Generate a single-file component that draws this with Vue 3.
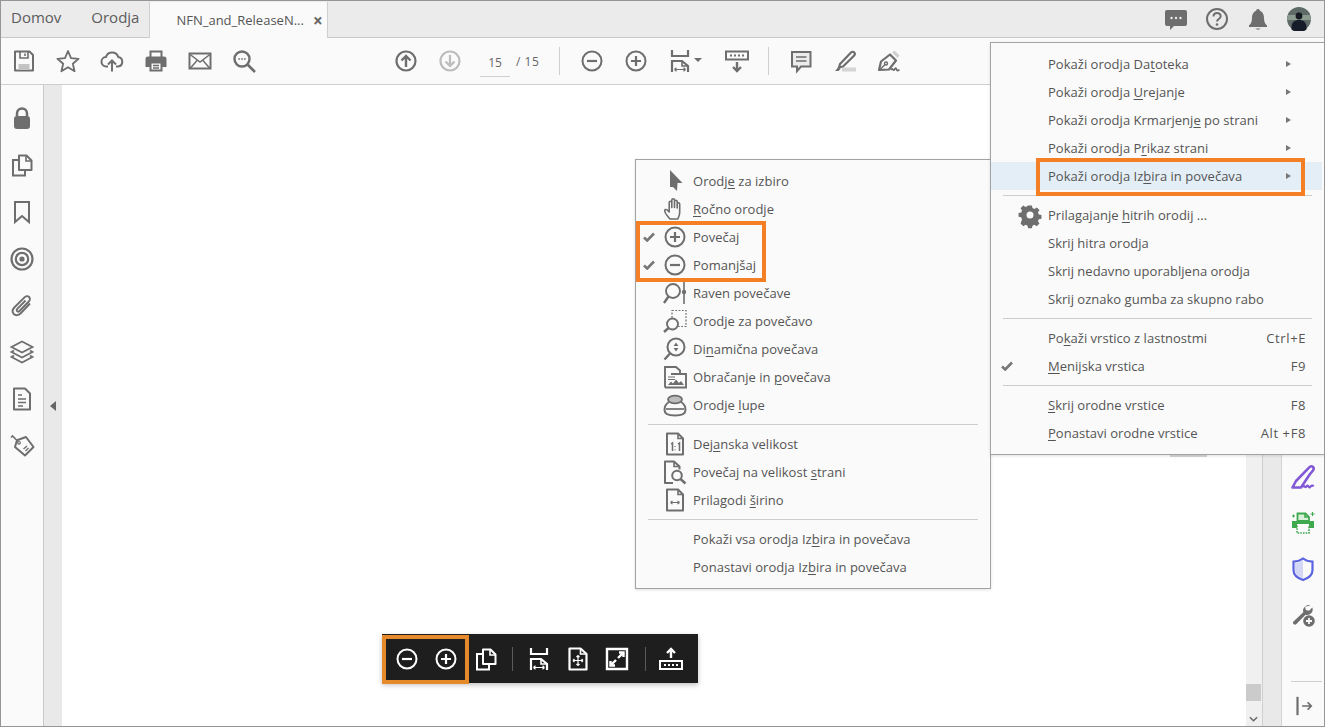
<template>
  <div class="app">
    <!-- tab bar -->
    <div class="tabbar">
      <span class="nav-tab domov">Domov</span>
      <span class="nav-tab orodja">Orodja</span>
      <div class="doc-tab">
        <span>NFN_and_ReleaseN...</span>
        <span class="tab-close">×</span>
      </div>
      <div class="tab-icons">
        <svg class="ico" viewBox="0 0 24 24" v-html="icons.chat"></svg>
        <svg class="ico" viewBox="0 0 24 24" v-html="icons.help"></svg>
        <svg class="ico" viewBox="0 0 24 24" v-html="icons.bell"></svg>
        <svg class="avatar" viewBox="0 0 24 24">
          <circle cx="12" cy="12" r="12" fill="#5d6a66" />
          <path d="M1 8h22a12 12 0 0 1 1 5H0a12 12 0 0 1 1-5z" fill="#8a9a8e" />
          <circle cx="12" cy="9" r="3.4" fill="#14171f" />
          <path d="M4.500 22.500c-.5-7 2.500-9.500 7.500-9.500s8 2.500 7.500 9.500a12 12 0 0 1-15 0z" fill="#171c2b" />
        </svg>
      </div>
    </div>

    <!-- main toolbar -->
    <div class="toolbar">
      <button v-for="k in toolsLeft" :key="k" class="tool"><svg class="ico" viewBox="0 0 24 24" v-html="icons[k]"></svg></button>
      <div class="nav-group">
        <button class="tool"><svg class="ico" viewBox="0 0 24 24" v-html="icons.up"></svg></button>
        <button class="tool off"><svg class="ico" viewBox="0 0 24 24" v-html="icons.down"></svg></button>
        <span class="page-input">15</span>
        <span class="page-total">/ 15</span>
        <i class="tool-sep first"></i>
        <button class="tool"><svg class="ico" viewBox="0 0 24 24" v-html="icons.minus"></svg></button>
        <button class="tool"><svg class="ico" viewBox="0 0 24 24" v-html="icons.plus"></svg></button>
        <button class="tool fit"><svg class="ico" viewBox="0 0 24 24" v-html="icons.fit"></svg><b class="caret"></b></button>
        <button class="tool"><svg class="ico" viewBox="0 0 24 24" v-html="icons.dock"></svg></button>
        <i class="tool-sep"></i>
        <button class="tool"><svg class="ico" viewBox="0 0 24 24" v-html="icons.comment"></svg></button>
        <button class="tool"><svg class="ico" viewBox="0 0 24 24" v-html="icons.marker"></svg></button>
        <button class="tool"><svg class="ico" viewBox="0 0 24 24" v-html="icons.pen"></svg></button>
      </div>
    </div>

    <!-- body -->
    <div class="body">
      <div class="left-rail">
        <button v-for="k in railLeft" :key="k" class="rail-btn"><svg class="ico" viewBox="0 0 24 24" v-html="icons[k]"></svg></button>
      </div>
      <div class="left-panel"><b class="collapse"></b></div>
      <div class="page"></div>
      <div class="scrollbar">
        <div class="thumb"></div>
        <svg class="chev" viewBox="0 0 10 6"><path d="M1 1l4 4 4-4" fill="none" stroke="#666" stroke-width="1.6" /></svg>
      </div>
      <div class="right-panel"></div>
      <div class="right-rail">
        <button class="rail-btn sign"><svg class="ico" viewBox="0 0 24 24" v-html="icons.sign"></svg></button>
        <button class="rail-btn green"><svg class="ico" viewBox="0 0 24 24" v-html="icons.printer"></svg></button>
        <button class="rail-btn shield"><svg class="ico" viewBox="0 0 24 24" v-html="icons.shield"></svg></button>
        <button class="rail-btn"><svg class="ico" viewBox="0 0 24 24" v-html="icons.wrench"></svg></button>
        <div class="rail-sep"></div>
        <button class="rail-btn last"><svg class="ico" viewBox="0 0 24 24" v-html="icons.expand"></svg></button>
      </div>
    </div>

    <!-- bit of the page toolbar that peeks out under the menu -->
    <div class="peek"></div>

    <!-- context menus -->
    <div v-for="m in menus" :key="m.id" class="menu" :class="m.id">
      <template v-for="(it, i) in m.items" :key="i">
        <div v-if="it === '-'" class="sep"></div>
        <div v-else class="row" :class="{ active: it.active }">
          <span class="check"><svg v-if="it.check" viewBox="0 0 12 10"><path d="M1 5.500l3.200 3L11 1.500" fill="none" stroke="#777" stroke-width="2.600" /></svg></span>
          <span class="row-icon"><svg v-if="it.icon" class="ico" viewBox="0 0 24 24" v-html="icons[it.icon]"></svg></span>
          <span class="label">{{ parts(it.t)[0] }}<u>{{ parts(it.t)[1] }}</u>{{ parts(it.t)[2] }}</span>
          <span v-if="it.key" class="shortcut">{{ it.key }}</span>
          <b v-if="it.sub" class="sub-arrow"></b>
        </div>
      </template>
    </div>

    <!-- floating toolbar -->
    <div class="float-bar">
      <svg class="ico a" viewBox="0 0 24 24" v-html="icons.minus"></svg>
      <svg class="ico b" viewBox="0 0 24 24" v-html="icons.plus"></svg>
      <svg class="ico c" viewBox="0 0 24 24" v-html="icons.pages"></svg>
      <i class="float-sep s1"></i>
      <svg class="ico d" viewBox="0 0 24 24" v-html="icons.fit"></svg>
      <svg class="ico e" viewBox="0 0 24 24" v-html="icons.fitPage"></svg>
      <svg class="ico f" viewBox="0 0 24 24" v-html="icons.full"></svg>
      <i class="float-sep s2"></i>
      <svg class="ico g" viewBox="0 0 24 24" v-html="icons.undock"></svg>
    </div>

    <!-- orange callouts -->
    <div class="mark mark-zoom"></div>
    <div class="mark mark-row"></div>
    <div class="mark mark-float"></div>
  </div>
</template>

<script setup>
const fill = 'fill="currentColor" stroke="none"'

const icons = {
  save: `<path d="M3 2.500h14.500L21 6v15.500H3z" stroke-linejoin="round"/><path d="M8 3v6h8V3M13 4.500v2.500" stroke-width="1.600"/><rect x="6.500" y="15" width="11" height="6" fill="#c4c4c4" stroke="none"/>`,
  star: `<path d="M12 2l3 7.200 7.600.6-5.800 4.900 1.800 7.500L12 18.200l-6.600 4 1.800-7.500L1.400 9.800 9 9.200z" stroke-width="1.800" stroke-linejoin="round"/>`,
  cloud: `<path d="M8 17.500H6.500a4.700 4.700 0 0 1-.6-9.400A6.500 6.500 0 0 1 18.300 8a4.800 4.800 0 0 1-.3 9.500H16"/><path d="M12 22.500V11.500M8 15.500l4-4 4 4"/>`,
  print: `<path d="M6.500 8V2.500h11V8" stroke-width="2"/><path d="M4 7.500h16a2.500 2.500 0 0 1 2.500 2.500v8H18v-4H6v4H1.500v-8A2.500 2.500 0 0 1 4 7.500z" ${fill}/><path d="M6.500 13.500h11v8h-11z" stroke-width="2"/><path d="M9 16.500h6M9 19h6" stroke-width="1.300"/>`,
  mail: `<path d="M1.500 4.500h21v15h-21z"/><path d="M1.500 5l10.500 8 10.500-8M2 19.500l7.500-8.500M22 19.500L14.500 11" stroke-width="1.500"/>`,
  search: `<circle cx="10" cy="10" r="7.500" stroke-width="2.400"/><path d="M15.500 15.500L23 23" stroke-width="2.600"/><path d="M6.500 10h1.200M9.400 10h1.200M12.300 10h1.200" stroke-width="1.800"/>`,
  up: `<circle cx="12" cy="12" r="9.500" stroke-width="2.200"/><path d="M12 18V7M7.500 11.500L12 7l4.500 4.500" stroke-width="2.400"/>`,
  down: `<circle cx="12" cy="12" r="9.500" stroke-width="2.200"/><path d="M12 6v11M7.500 12.500L12 17l4.500-4.500" stroke-width="2.200"/>`,
  minus: `<circle cx="12" cy="12" r="9.500" stroke-width="2"/><path d="M7 12h10" stroke-width="2.200"/>`,
  plus: `<circle cx="12" cy="12" r="9.500" stroke-width="2"/><path d="M7 12h10M12 7v10" stroke-width="2.200"/>`,
  fit: `<path d="M4 1v6h16V1" stroke-width="2.200"/><path d="M4 23v-11h10l6 5v6" stroke-width="2.200"/><path d="M14 12v5h6" stroke-width="1.600"/><path d="M6.500 20.500h11M6.500 20.500l2-1.800M6.500 20.500l2 1.800M17.500 20.500l-2-1.800M17.500 20.500l-2 1.800" stroke-width="1.200"/>`,
  dock: `<path d="M1 2.500h22v8H1z" stroke-width="2"/><path d="M5 6.500h2M9 6.500h2M13 6.500h2M17 6.500h2" stroke-width="2"/><path d="M12 13v9M8 18l4 4 4-4" stroke-width="2.400"/>`,
  comment: `<path d="M3 3h18.500v14.500H12l-4 4.500v-4.500H3z" stroke-width="2" fill="#ececec"/><path d="M7 8h10.500M7 12h10.500" stroke-width="1.500"/>`,
  marker: `<path d="M7 15L18 3.500c1-1 2.500-1 3.200 0 .8.800.8 2 0 3L10 17.500l-4 1z" stroke-width="2.200"/><path d="M2 22l3.500-4 2 2-2 2z" ${fill}/><rect x="9" y="18.500" width="14" height="4" fill="#d4d4d4" stroke="none"/>`,
  pen: `<path d="M2 21l2-8.500L13 5.500l6 6-7 9z" stroke-width="2.200" stroke-linejoin="round"/><path d="M15 3.500l2.500-2 5 5-2 2.500z" fill="#cfcfcf" stroke="none"/><path d="M2.500 21L8 15.500" stroke-width="1.500"/><circle cx="9" cy="14.500" r="1.500" stroke-width="1.400"/><path d="M14 21c1.500-3 2 .8 3 0s1.300-3 2.300-1 1.200 2 3.200.8" stroke-width="1.700"/>`,
  chat: `<path d="M3 3h18a2 2 0 0 1 2 2v12a2 2 0 0 1-2 2H10l-4 4v-4H3a2 2 0 0 1-2-2V5a2 2 0 0 1 2-2z" ${fill}/><circle cx="7.500" cy="11" r="1.200" fill="#ebebeb" stroke="none"/><circle cx="12" cy="11" r="1.200" fill="#ebebeb" stroke="none"/><circle cx="16.500" cy="11" r="1.200" fill="#ebebeb" stroke="none"/>`,
  help: `<circle cx="12" cy="12" r="10" stroke-width="2"/><path d="M8.500 9.500c0-4.500 7.200-4.500 7.200-.3 0 2.800-3.700 2.700-3.700 5.300" stroke-width="2"/><circle cx="12" cy="17.500" r="1.300" ${fill}/>`,
  bell: `<path d="M12 2c1.200 0 1.800.8 1.800 1.800C17 5 18 8 18 11c0 4 1.300 6 3 7.500v1.500H3v-1.500C4.700 17 6 15 6 11c0-3 1-6 4.200-7.200C10.200 2.800 10.800 2 12 2z" ${fill}/><path d="M9.500 21.500h5c-.8 1.500-4.200 1.500-5 0z" ${fill}/>`,
  lock: `<path d="M7 11V7.500a5 5 0 0 1 10 0V11" stroke-width="2.500"/><rect x="4" y="10" width="16" height="13" rx="3" ${fill}/>`,
  pages: `<path d="M9 2.500h7.500l5 5V17H9z" stroke-width="2" stroke-linejoin="round"/><path d="M16 2.500v5.500h5.500" stroke-width="1.600"/><path d="M9 7H3v15.500h12V17" stroke-width="2"/>`,
  bookmark: `<path d="M5 2h14v20l-7-6-7 6z" stroke-width="2"/>`,
  target: `<circle cx="12" cy="12" r="10.500" stroke-width="2.200"/><circle cx="12" cy="12" r="6.200" stroke-width="2.200"/><circle cx="12" cy="12" r="2.600" ${fill}/>`,
  clip: `<path d="M20 9.500L10.500 19.500c-2 2-5 2.300-6.700.5s-1.300-4.500.5-6.500L14.500 3.300c1.300-1.300 3.400-1.500 4.600-.3s1 3.200-.3 4.500L9.500 17c-.8.700-1.800.8-2.400.2s-.5-1.700.2-2.400L15.500 6.500" stroke-width="1.900"/>`,
  layers: `<path d="M12 1.500L22.500 7 12 12.500 1.500 7z" stroke-width="1.800"/><path d="M4 10.500L1.500 12 12 17.500 22.500 12 20 10.500" stroke-width="1.800"/><path d="M4 15.500L1.500 17 12 22.500 22.500 17 20 15.500" stroke-width="1.800"/>`,
  doc: `<path d="M4 1.500h11l5 5v16H4z" stroke-width="2" stroke-linejoin="round"/><path d="M8 8h4M8 12h8M8 15.500h8M8 19h5" stroke-width="1.500"/>`,
  tag: `<path d="M7 6.200L16 3l7.500 10-8.500 8.500L5 13z" stroke-width="2" stroke-linejoin="round"/><path d="M8 7.500L2.500 2 1 3.500" stroke-width="1.600"/><circle cx="9" cy="8.800" r="1.300" stroke-width="1.200"/><path d="M13.500 15l3.500-3M15.500 17l3-3" stroke-width="1.300"/>`,
  sign: `<path d="M1.500 22.500h8.500L19 9l3-3.500c1-1.500 1-2.500 0-3.500s-2.500-1-3.500.2L5 16z" stroke-width="2.600" stroke-linejoin="round"/><path d="M11.500 22c1.800-2.500 2.400.5 3.400 0s1.400-2.500 2.400-.8 1.300 1.300 2 .6 1.800-1.800 3.500-.6" stroke-width="2.200"/>`,
  printer: `<path d="M1 10h22v7H18v-4H6v4H1z" ${fill}/><path d="M6.500 10V2.500h8l3.500 3.500v4z" fill="#d8efd8" stroke-width="1.800"/><path d="M14 2.500V6h4" stroke-width="1.600"/><path d="M6 14.500v7.500h12v-7.500" stroke-width="1.600" stroke-dasharray="1.600 1.100"/><path d="M21.500 1v4M19.500 3h4M1 5h3M2.500 3.500v3" stroke-width="1.100"/>`,
  shield: `<path d="M12 3v18.500C7.500 20 4 17 4 13V6c3 0 6-1 8-3z" fill="#d3d6f5" stroke="none"/><path d="M12 1.500c3 2.300 6 3 9.500 3.200V13c0 4.700-4 8.200-9.500 10-5.500-1.800-9.500-5.300-9.500-10V4.700C6 4.500 9 3.800 12 1.500z" stroke-width="2.200"/>`,
  wrench: `<path d="M19.500 2.500a5.500 5.500 0 0 0-7.200 6.700L2.500 18.500c-1.600 1.700.9 4.200 2.700 2.700l9.300-9.500a5.500 5.500 0 0 0 6.800-7.200l-3.300 3.200-3.200-.8-.8-3.100z" ${fill}/><circle cx="18" cy="18" r="5.800" ${fill}/><path d="M15 18h6M18 15v6" stroke="#fafafa" stroke-width="1.800"/>`,
  expand: `<path d="M6 2v20" stroke-width="2.400"/><path d="M11 12h10M17 8l4 4-4 4" stroke-width="1.800"/>`,
  pointer: `<path d="M7 1l12.500 13H14.500l-.5 8-4-4H7z" ${fill}/>`,
  hand: `<path d="M7 22c-2-2.500-5-5.500-5.300-8-.2-1.500 1.500-2 2.500-1l2 2V5.500c0-1.700 2.600-1.700 2.600 0v5V3c0-1.700 2.700-1.700 2.700 0v7.500V4.500c0-1.700 2.700-1.700 2.700 0v6.500V7c0-1.700 2.500-1.700 2.500 0V15.500c0 3-1 4.500-2 6.500z" stroke-width="1.600" stroke-linejoin="round"/>`,
  level: `<circle cx="10" cy="10" r="7" stroke-width="1.900"/><path d="M5.500 15.500L1 22" stroke-width="2.400"/><path d="M21 1v22" stroke-width="1.600"/><circle cx="21" cy="11" r="2.200" ${fill}/>`,
  marquee: `<rect x="9" y="1.500" width="14" height="16" stroke-width="1.200" stroke-dasharray="1.800 1.500"/><circle cx="9.500" cy="15" r="5.500" stroke-width="1.900" fill="#fafafa"/><path d="M5.500 19L1 23" stroke-width="2.400"/>`,
  dyn: `<circle cx="13" cy="10" r="8.500" stroke-width="2"/><path d="M7 16.500L1.500 22.500" stroke-width="2.400"/><path d="M13 5.500l2.400 3.500h-4.800zM13 14.500l2.400-3.500h-4.800z" ${fill}/>`,
  panzoom: `<path d="M2 22.500V2h11l4 3.500V8" stroke-width="1.900"/><path d="M2 22.500h21V9H8" stroke-width="1.900"/><path d="M5 12h7M5 14.500h7" stroke-width="1"/><path d="M5 20l3-3.500 2 2 3-4 3 3.500 2-2 3 4z" ${fill}/>`,
  loupe: `<path d="M6 9C2.500 11 1.500 14 1.500 17c0 3.500 4 5.500 10.500 5.500s10.500-2 10.500-5.500c0-3-1-6-4.500-8" stroke-width="2"/><ellipse cx="12" cy="6.500" rx="7" ry="3.800" fill="#bdbdbd" stroke-width="1.800"/><path d="M3 16h18" stroke-width="1.700"/>`,
  actual: `<path d="M4 1.500h11l5 5v16H4z" stroke-width="2" stroke-linejoin="round"/><path d="M15 1.500v5h5" stroke-width="1.600"/><path d="M8 12l1.500-1v8M15 12l1.500-1v8" stroke-width="1.500"/><path d="M12 14v.8M12 17.500v.8" stroke-width="1.400"/>`,
  fitpage: `<path d="M10 23H2V1.500h9l5.500 5v3" stroke-width="2" stroke-linejoin="round"/><path d="M11 1.500v5h5.500" stroke-width="1.600"/><circle cx="14" cy="15.500" r="4.800" stroke-width="2"/><path d="M17.500 19l5 4.500" stroke-width="2.400"/>`,
  width: `<path d="M4 1.500h11l5 5v16H4z" stroke-width="2" stroke-linejoin="round"/><path d="M15 1.500v5h5" stroke-width="1.600"/><path d="M7.500 14.500h9M7.500 14.500l2-1.600M7.500 14.500l2 1.600M16.500 14.500l-2-1.600M16.500 14.500l-2 1.600" stroke-width="1.200"/>`,
  gear: `<path d="M9.800 1h4.400l.6 3 2.300 1 2.600-1.700 3.100 3.100-1.700 2.600 1 2.300 3 .6v4.400l-3 .6-1 2.300 1.700 2.600-3.100 3.100-2.600-1.700-2.300 1-.6 3H9.800l-.6-3-2.300-1-2.600 1.700-3.100-3.100L2.900 17l-1-2.300-3-.6V9.700l3-.6 1-2.300L1.200 4.200l3.100-3.100L6.900 2.800l2.300-1z" transform="translate(1.500 1.500) scale(.875)" ${fill}/><circle cx="12" cy="12" r="3.500" fill="#fafafa" stroke="none"/>`,
  fitPage: `<path d="M3.500 1.500h11l6 5.500v15.500h-17z" stroke-width="2.200" stroke-linejoin="round"/><path d="M14.500 1.500V7h6" stroke-width="1.600"/><path d="M12 8.500v10M7 13.500h10M12 8.500l-1.500 1.500M12 8.500l1.500 1.500M12 18.500L10.500 17M12 18.500l1.500-1.500M7 13.500L8.500 12M7 13.500L8.500 15M17 13.500L15.500 12M17 13.500L15.500 15" stroke-width="1.200"/>`,
  full: `<path d="M2 2h20v20H2z" stroke-width="2.400"/><path d="M13 11l5-5M14 5.500h4.500V10" stroke-width="2.400"/><path d="M11 13l-5 5M10 18.500H5.500V14" stroke-width="2.400"/>`,
  undock: `<path d="M1 14h22v8H1z" stroke-width="2"/><path d="M5 18h2M9 18h2M13 18h2M17 18h2" stroke-width="2"/><path d="M12 11V2M8 6l4-4 4 4" stroke-width="2.400"/>`
}

const toolsLeft = ['save', 'star', 'cloud', 'print', 'mail', 'search']
const railLeft = ['lock', 'pages', 'bookmark', 'target', 'clip', 'layers', 'doc', 'tag']

// & marks the mnemonic letter of a menu entry
function parts(text) {
  const i = text.indexOf('&')
  if (i < 0) return [text, '', '']
  return [text.slice(0, i), text[i + 1], text.slice(i + 2)]
}

const menus = [
  {
    id: 'menu-zoom',
    items: [
      { t: 'Orodj&e za izbiro', icon: 'pointer' },
      { t: '&Ročno orodje', icon: 'hand' },
      { t: 'Povečaj', icon: 'plus', check: true },
      { t: 'Pomanjšaj', icon: 'minus', check: true },
      { t: 'Raven povečave', icon: 'level' },
      { t: 'Orodje za povečavo', icon: 'marquee' },
      { t: 'Di&namična povečava', icon: 'dyn' },
      { t: 'Obračanje in &povečava', icon: 'panzoom' },
      { t: 'Orodje &lupe', icon: 'loupe' },
      '-',
      { t: 'Dej&anska velikost', icon: 'actual' },
      { t: 'Povečaj na velikost &strani', icon: 'fitpage' },
      { t: 'Prilagodi &širino', icon: 'width' },
      '-',
      { t: 'Pokaži vsa orodja Iz&bira in povečava' },
      { t: 'Ponastavi orodja Iz&bira in povečava' }
    ]
  },
  {
    id: 'menu-tools',
    items: [
      { t: 'Pokaži orodja Da&toteka', sub: true },
      { t: 'Pokaži orodja &Urejanje', sub: true },
      { t: 'Pokaži orodja Krmarjenj&e po strani', sub: true },
      { t: 'Pokaži orodja P&rikaz strani', sub: true },
      { t: 'Pokaži orodja Iz&bira in povečava', sub: true, active: true },
      '-',
      { t: 'Prilagajanje &hitrih orodij ...', icon: 'gear' },
      { t: 'Skrij hitra orodja' },
      { t: 'Skrij nedavno uporabljena orodja' },
      { t: 'Skrij oznako gumba za skupno rabo' },
      '-',
      { t: 'Po&kaži vrstico z lastnostmi', key: 'Ctrl+E' },
      { t: '&Menijska vrstica', key: 'F9', check: true },
      '-',
      { t: '&Skrij orodne vrstice', key: 'F8' },
      { t: '&Ponastavi orodne vrstice', key: 'Alt +F8' }
    ]
  }
]
</script>

<style scoped>
.app {
  position: relative;
  width: 1325px;
  height: 727px;
  box-sizing: border-box;
  border: 1px solid #969696;
  overflow: hidden;
  display: flex;
  flex-direction: column;
  background: #fff;
  font-family: "Open Sans", "Noto Sans", sans-serif;
  color: #555;
}
.ico {
  display: block;
  width: 24px;
  height: 24px;
  fill: none;
  stroke: currentColor;
  stroke-width: 2;
  color: #6e6e6e;
  overflow: visible;
}
button {
  border: 0;
  background: none;
  padding: 0;
}

/* tabs */
.tabbar {
  height: 36px;
  flex: none;
  display: flex;
  align-items: stretch;
  background: #ebebeb;
  border-bottom: 1px solid #c9c9c9;
  box-sizing: content-box;
}
.nav-tab {
  font-size: 15px;
  color: #5c5c5c;
  line-height: 33px;
}
.domov {
  margin-left: 10px;
}
.orodja {
  margin-left: 30px;
}
.doc-tab {
  margin: 1px 0 -1px 10px;
  width: 179px;
  box-sizing: border-box;
  background: #fafafa;
  border-left: 1px solid #cfcfcf;
  border-right: 1px solid #cfcfcf;
  display: flex;
  align-items: center;
  padding-left: 26px;
  font-size: 13px;
  color: #555;
}
.tab-close {
  margin-left: 9px;
  font-size: 17px;
  font-weight: 700;
  color: #666;
}
.tab-icons {
  margin-left: auto;
  display: flex;
  align-items: center;
  gap: 17px;
  padding-right: 13px;
}
.avatar {
  width: 24px;
  height: 24px;
}

/* toolbar */
.toolbar {
  height: 46px;
  flex: none;
  display: flex;
  align-items: center;
  padding-left: 1px;
  background: #fafafa;
  border-bottom: 1px solid #cfcfcf;
}
.tool {
  width: 44px;
  height: 32px;
  display: flex;
  align-items: center;
  justify-content: center;
  flex: none;
}
.tool.off .ico {
  color: #bcbcbc;
}
.tool.fit {
  position: relative;
  width: 57px;
  justify-content: flex-start;
  padding-left: 10px;
}
.caret {
  position: absolute;
  left: 36px;
  top: 13px;
  border: 4px solid transparent;
  border-top: 4px solid #6e6e6e;
}
.nav-group {
  display: flex;
  align-items: center;
  margin-left: 118px;
}
.page-input {
  width: 30px;
  margin-left: 8px;
  height: 27px;
  line-height: 27px;
  border-bottom: 1px solid #cfcfcf;
  text-align: center;
  font-size: 12px;
  color: #666;
  margin-top: 3px;
}
.page-total {
  margin-left: 6px;
  width: 24px;
  font-size: 12px;
  letter-spacing: 0.5px;
  color: #666;
  white-space: nowrap;
}
.tool-sep {
  width: 1px;
  height: 28px;
  background: #cfcfcf;
  margin: 0 10px 0 9px;
  flex: none;
}
.tool-sep.first {
  margin-left: 19px;
  margin-right: 10px;
}

/* body */
.body {
  flex: 1;
  display: flex;
  min-height: 0;
}
.left-rail {
  width: 42px;
  flex: none;
  box-sizing: content-box;
  background: #fafafa;
  border-right: 1px solid #c9c9c9;
  padding-top: 10px;
}
.rail-btn {
  display: flex;
  align-items: center;
  justify-content: center;
  width: 100%;
  height: 46.8px;
}
.left-panel {
  width: 18px;
  flex: none;
  background: #e9e9e9;
  display: flex;
  align-items: center;
  justify-content: center;
}
.collapse {
  border: 5px solid transparent;
  border-right: 6px solid #666;
  border-left: 0;
}
.page {
  flex: 1;
  background: #fff;
}
.scrollbar {
  width: 16px;
  flex: none;
  position: relative;
  background: #f0f0f0;
  border-right: 1px solid #cfcfcf;
}
.thumb {
  position: absolute;
  left: 0;
  right: 1px;
  bottom: 25px;
  height: 17px;
  background: #cbcbcb;
}
.chev {
  position: absolute;
  left: 3px;
  bottom: 4px;
  width: 9px;
  height: 6px;
}
.right-panel {
  width: 18px;
  flex: none;
  background: #e9e9e9;
}
.right-rail {
  width: 42px;
  flex: none;
  background: #fafafa;
  border-left: 1px solid #d4d4d4;
  display: flex;
  flex-direction: column;
  justify-content: flex-end;
}
.right-rail .rail-btn {
  height: 46px;
}
.sign .ico {
  color: #8258d6;
}
.green .ico {
  color: #3fa94f;
}
.shield .ico {
  color: #5a64e0;
}
.rail-sep {
  height: 1px;
  background: #cfcfcf;
  margin: 43px 2px 0 9px;
}
.right-rail .rail-btn.last {
  height: 44px;
  padding-top: 4px;
}
.right-rail .last .ico {
  width: 22px;
  height: 22px;
}
.peek {
  position: absolute;
  left: 1169px;
  top: 453px;
  width: 37px;
  height: 3px;
  background: #d6d6d6;
}

/* menus */
.menu {
  position: absolute;
  box-sizing: border-box;
  background: #fafafa;
  border: 1px solid #a3a3a3;
  padding: 7px 0;
  font-size: 13px;
  color: #555;
}
.menu-zoom {
  left: 634px;
  top: 158px;
  width: 356px;
  height: 430px;
  box-shadow: 0 1px 3px rgba(0, 0, 0, 0.12);
}
.menu-tools {
  left: 989px;
  top: 41px;
  width: 335px;
  height: 413px;
  box-shadow: 0 1px 3px rgba(0, 0, 0, 0.12);
}
.row {
  display: flex;
  align-items: center;
  height: 28px;
  white-space: nowrap;
  position: relative;
}
.row.active {
  background: #e4eef7;
  margin-right: 2px;
}
.sep {
  height: 1px;
  margin: 5px 12px;
  background: #cdcdcd;
}
.check {
  width: 26px;
  flex: none;
  display: flex;
  justify-content: center;
}
.check svg {
  width: 12px;
  height: 10px;
}
.menu-tools .check {
  padding-left: 6px;
  box-sizing: border-box;
}
.row-icon {
  width: 26px;
  flex: none;
  display: flex;
  justify-content: center;
  margin-right: 5px;
}
.label {
  flex: 1;
  letter-spacing: 0.02px;
}
.label u {
  text-underline-offset: 2px;
}
.shortcut {
  margin-right: 18px;
  letter-spacing: 0.6px;
}
.sub-arrow {
  border: 3.5px solid transparent;
  border-left: 5px solid #777;
  border-right: 0;
  margin-right: 33px;
}
.row.active .sub-arrow {
  margin-right: 31px;
}

/* floating bar */
.float-bar {
  position: absolute;
  left: 381px;
  top: 633px;
  width: 316px;
  height: 49px;
  background: #1e1e1e;
  display: flex;
  align-items: center;
  box-shadow: 0 2px 5px rgba(0, 0, 0, 0.25);
}
.float-bar .ico {
  color: #fff;
  flex: none;
}
.float-bar .a {
  margin-left: 13px;
}
.float-bar .b {
  margin-left: 15px;
}
.float-bar .c {
  margin-left: 16px;
}
.float-bar .d {
  margin-left: 14px;
}
.float-bar .e,
.float-bar .f {
  margin-left: 15px;
}
.float-bar .g {
  margin-left: 13px;
}
.float-sep {
  width: 1px;
  height: 24px;
  background: #5a5a5a;
  flex: none;
}
.s1 {
  margin-left: 14px;
}
.s2 {
  margin-left: 16px;
}

/* callouts */
.mark {
  position: absolute;
  box-sizing: border-box;
  border: 4px solid #f47f24;
}
.mark-zoom {
  left: 635px;
  top: 220px;
  width: 130px;
  height: 61px;
}
.mark-row {
  left: 1035px;
  top: 157px;
  width: 269px;
  height: 38px;
}
.mark-float {
  left: 381px;
  top: 634px;
  width: 87px;
  height: 49px;
  border-color: #e5892a;
}
</style>
